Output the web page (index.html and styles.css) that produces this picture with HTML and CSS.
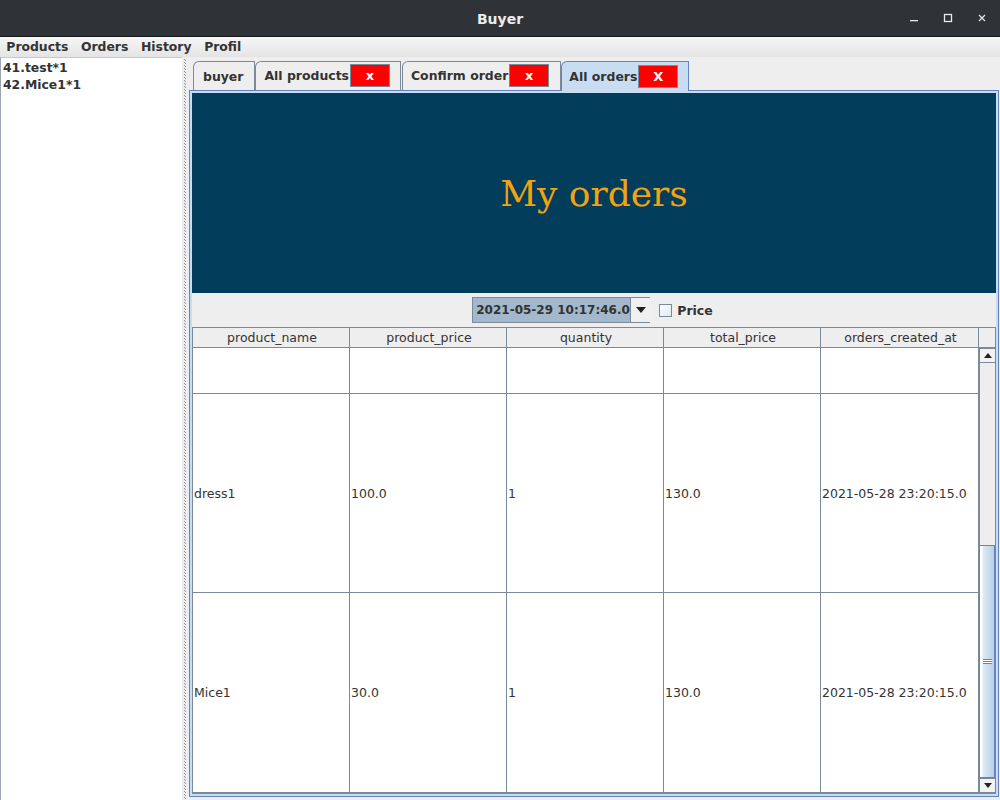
FILE: index.html
```html
<!DOCTYPE html>
<html>
<head>
<meta charset="utf-8">
<link rel="stylesheet" href="styles.css">
</head>
<body>
<div class="window">
  <div class="titlebar">
    <div></div>
    <div class="title">Buyer</div>
    <div class="controls">
      <svg width="12" height="12" viewBox="0 0 12 12"><rect x="2" y="8" width="8" height="1.3" fill="#e8e8e8"/></svg>
      <svg width="12" height="12" viewBox="0 0 12 12"><rect x="2.5" y="2.5" width="7" height="7" fill="none" stroke="#e8e8e8" stroke-width="1.3"/></svg>
      <svg width="12" height="12" viewBox="0 0 12 12"><path d="M3 3 L9 9 M9 3 L3 9" stroke="#e8e8e8" stroke-width="1.2"/></svg>
    </div>
  </div>
  <div class="menubar">
    <span class="menu">Products</span>
    <span class="menu">Orders</span>
    <span class="menu">History</span>
    <span class="menu">Profil</span>
  </div>
  <div class="main">
    <div class="list">
      <div class="list-item">41.test*1</div>
      <div class="list-item">42.Mice1*1</div>
    </div>
    <div class="splitter"><div class="dots"></div><div class="dots dots2"></div></div>
    <div class="right">
      <div class="tabs">
        <div class="tab tab-buyer">buyer</div>
        <div class="tab tab-products">All products<span class="close">x</span></div>
        <div class="tab tab-confirm">Confirm order<span class="close">x</span></div>
        <div class="tab selected">All orders<span class="close">X</span></div>
      </div>
      <div class="panel">
        <div class="banner">My orders</div>
        <div class="filters">
          <div class="combo">
            <div class="combo-value">2021-05-29 10:17:46.0</div>
            <div class="combo-arrow"><svg width="10" height="6" viewBox="0 0 10 6"><path d="M0 0 L10 0 L5 6 Z" fill="#222"/></svg></div>
          </div>
          <label class="check"><span class="box"></span>Price</label>
        </div>
        <div class="tablewrap">
          <div class="grid">
            <div class="head">
              <div class="hcell">product_name</div>
              <div class="hcell">product_price</div>
              <div class="hcell">quantity</div>
              <div class="hcell">total_price</div>
              <div class="hcell">orders_created_at</div>
            </div>
            <div class="row row-partial">
              <div class="cell"></div><div class="cell"></div><div class="cell"></div><div class="cell"></div><div class="cell"></div>
            </div>
            <div class="row">
              <div class="cell">dress1</div><div class="cell">100.0</div><div class="cell">1</div><div class="cell">130.0</div><div class="cell">2021-05-28 23:20:15.0</div>
            </div>
            <div class="row">
              <div class="cell">Mice1</div><div class="cell">30.0</div><div class="cell">1</div><div class="cell">130.0</div><div class="cell">2021-05-28 23:20:15.0</div>
            </div>
          </div>
          <div class="vscroll">
            <div class="corner"></div>
            <div class="sb-btn"><svg width="8" height="5" viewBox="0 0 8 5"><path d="M0 5 L8 5 L4 0 Z" fill="#222"/></svg></div>
            <div class="track"></div>
            <div class="thumb"><div class="grip"></div></div>
            <div class="sb-btn"><svg width="8" height="5" viewBox="0 0 8 5"><path d="M0 0 L8 0 L4 5 Z" fill="#222"/></svg></div>
          </div>
        </div>
      </div>
    </div>
  </div>
</div>
</body>
</html>
```

FILE: styles.css
```css
* { box-sizing: border-box; }
html, body { margin: 0; padding: 0; }
body {
  width: 1000px;
  height: 800px;
  overflow: hidden;
  background: #eeeeee;
  font-family: "DejaVu Sans", "Liberation Sans", sans-serif;
  color: #333333;
}
.window {
  display: flex;
  flex-direction: column;
  height: 800px;
}
.titlebar {
  height: 37px;
  flex: none;
  background: #2f3337;
  border-bottom: 1px solid #16181a;
  display: grid;
  grid-template-columns: 1fr auto 1fr;
  align-items: center;
}
.title {
  color: #ececec;
  font-weight: bold;
  font-size: 14px;
  padding-top: 1px;
}
.controls {
  justify-self: end;
  display: flex;
  gap: 22px;
  padding-right: 12px;
  align-items: center;
}
.menubar {
  height: 20px;
  flex: none;
  background: linear-gradient(#f6f6f6, #e4e4e4);
  display: flex;
  align-items: center;
  padding-bottom: 2px;
  font-weight: bold;
  font-size: 12.4px;
  color: #333;
}
.menu { padding: 0 6.3px; }
.main {
  flex: 1;
  display: flex;
  min-height: 0;
}
.list {
  width: 182px;
  flex: none;
  background: #ffffff;
  border-left: 1px solid #9aa6b2;
  border-top: 1px solid #c8c8c8;
  padding: 1px 2px;
  font-weight: bold;
  font-size: 12.4px;
}
.list-item { line-height: 17px; }
.splitter {
  width: 6px;
  flex: none;
  display: flex;
  justify-content: center;
  padding-top: 2px;
}
.dots {
  width: 1px;
  background: repeating-linear-gradient(to bottom, #8796a6 0 1px, transparent 1px 3px);
}
.dots2 { margin-top: 1px; }
.right {
  flex: 1;
  display: flex;
  flex-direction: column;
  padding: 4px 1px 3px 1px;
}
.tabs {
  display: flex;
  padding-left: 4px;
  height: 29px;
  flex: none;
  position: relative;
  z-index: 2;
}
.tab {
  height: 29px;
  display: flex;
  align-items: center;
  padding: 0 11px 1px 8px;
  border: 1px solid #7a8a99;
  border-bottom: none;
  border-top-left-radius: 6px;
  background: #eeeeee;
  font-weight: bold;
  font-size: 12.45px;
  color: #333;
  white-space: nowrap;
}
.tab-buyer { padding: 0 11px 0 9px; }
.tab-products { margin-right: 1px; padding-right: 10px; }
.tab-confirm { padding-right: 11px; }
.tab.selected {
  background: #c8ddf2;
  border-color: #6382bf;
  height: 30px;
  padding-left: 7px;
  padding-right: 10px;
}
.close {
  width: 40px;
  height: 23px;
  margin-left: 1px;
  background: #ff0000;
  border: 1px solid #7a8a99;
  color: #ffffff;
  font-weight: bold;
  font-size: 13px;
  display: flex;
  align-items: center;
  justify-content: center;
}
.panel {
  flex: 1;
  display: flex;
  flex-direction: column;
  border: 1px solid #6382bf;
  padding: 2px;
  background: #c8ddf2;
  min-height: 0;
}
.banner {
  height: 200px;
  flex: none;
  background: #023d5b;
  color: #f2a30f;
  font-family: "DejaVu Serif", "Liberation Serif", serif;
  font-size: 36px;
  display: flex;
  align-items: center;
  justify-content: center;
}
.filters {
  height: 34px;
  flex: none;
  background: #eeeeee;
  display: flex;
  align-items: center;
  justify-content: center;
  gap: 9px;
  padding-right: 3px;
}
.combo {
  width: 178px;
  height: 26px;
  display: flex;
  border: 1px solid #7a8a99;
  background: #a3b8cc;
}
.combo-value {
  flex: 1;
  display: flex;
  align-items: center;
  padding-left: 3px;
  font-weight: bold;
  font-size: 12px;
  color: #333;
  white-space: nowrap;
}
.combo-arrow {
  width: 21px;
  flex: none;
  border-left: 1px solid #7a8a99;
  background: #f0f0f0;
  display: flex;
  align-items: center;
  justify-content: center;
}
.check {
  display: flex;
  align-items: center;
  gap: 5px;
  font-weight: bold;
  font-size: 12.5px;
  color: #333;
}
.box {
  width: 13px;
  height: 13px;
  border: 1px solid #7a8a99;
  background: linear-gradient(135deg, #ffffff, #dde8f3);
}
.tablewrap {
  flex: 1;
  display: flex;
  background: #eeeeee;
  border: 1px solid #7a8a99;
  min-height: 0;
}
.grid {
  width: 786px;
  flex: none;
  display: flex;
  flex-direction: column;
}
.head, .row {
  display: grid;
  grid-template-columns: 157px 157px 157px 157px 158px;
}
.head { height: 20px; }
.hcell {
  background: #eeeeee;
  border-right: 1px solid #7a8a99;
  border-bottom: 1px solid #7a8a99;
  font-size: 12.5px;
  color: #333;
  text-align: center;
  line-height: 19px;
  padding-left: 2px;
}
.row { height: 200px; }
.row-partial { height: 46px; }
.cell {
  background: #ffffff;
  border-right: 1px solid #7a8a99;
  border-bottom: 1px solid #7a8a99;
  display: flex;
  align-items: center;
  padding-left: 1px;
  font-size: 12.5px;
  color: #333;
}
.vscroll {
  flex: 1;
  display: flex;
  flex-direction: column;
}
.corner {
  height: 20px;
  flex: none;
  border-bottom: 1px solid #7a8a99;
  background: #eeeeee;
}
.sb-btn {
  height: 15px;
  flex: none;
  background: #f2f2f2;
  border: 1px solid #7a8a99;
  border-right: none;
  display: flex;
  align-items: center;
  justify-content: center;
}
.track {
  flex: 1;
  background: #eeeeee;
  border-left: 1px solid #7a8a99;
}
.thumb {
  height: 233px;
  flex: none;
  border: 1px solid #6382bf;
  background: linear-gradient(to right, #ffffff 0 2px, #dfeaf6 3px, #b8cfe5);
  display: flex;
  align-items: center;
  justify-content: center;
}
.grip {
  width: 9px;
  height: 5px;
  background: repeating-linear-gradient(to bottom, #6382bf 0 1px, #ffffff 1px 2px);
}
```
